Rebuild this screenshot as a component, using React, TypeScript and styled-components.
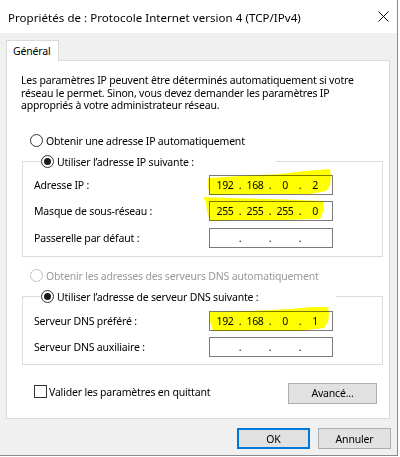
import React from "react";
import styled, { createGlobalStyle } from "styled-components";

const GlobalStyle = createGlobalStyle`
  html, body {
    margin: 0;
    padding: 0;
    background: #ffffff;
  }
  body {
    font-family: "Noto Sans", "Open Sans", "Liberation Sans", sans-serif;
    font-size: 10.5px;
    letter-spacing: -0.18px;
    color: #000000;
  }
`;

const Screen = styled.div`
  width: 400px;
  height: 457px;
  overflow: hidden;
  background: #ffffff;
`;

const Window = styled.div`
  position: relative;
  width: 398px;
  height: 456px;
  box-sizing: border-box;
  border-right: 1px solid #8a8a8a;
  border-bottom: 1px solid #8a8a8a;
  display: flex;
  flex-direction: column;
  background: #f0f0f0;
`;

const TitleBar = styled.div`
  height: 33px;
  flex: none;
  background: #ffffff;
  display: flex;
  align-items: center;
  justify-content: space-between;
  padding: 2px 0 0 8px;
  box-sizing: border-box;
`;

const TitleText = styled.span`
  white-space: nowrap;
  font-size: 11.5px;
  letter-spacing: 0.05px;
`;

const CloseButton = styled.div`
  width: 28px;
  height: 33px;
  display: flex;
  align-items: center;
  justify-content: center;
  margin-top: -2px;
`;

const Body = styled.div`
  flex: 1;
  padding: 7px 0 0 6px;
  display: flex;
  flex-direction: column;
`;

const TabStrip = styled.div`
  display: flex;
  height: 20px;
`;

const Tab = styled.div`
  position: relative;
  z-index: 1;
  width: 53px;
  height: 21px;
  box-sizing: border-box;
  border: 1px solid #d9d9d9;
  border-bottom: none;
  background: #ffffff;
  padding: 3px 0 0 6px;
`;

const Panel = styled.div`
  width: 384px;
  height: 359px;
  box-sizing: border-box;
  border: 1px solid #d9d9d9;
  background: #ffffff;
  padding: 13px 6px 0 14px;
  display: flex;
  flex-direction: column;
`;

const Description = styled.p`
  margin: 0;
  line-height: 12.5px;
  white-space: nowrap;
`;

const OptionRow = styled.div<{ $top: number }>`
  display: flex;
  align-items: center;
  height: 14px;
  margin: ${(p) => p.$top}px 0 0 9px;
`;

const RadioCircle = styled.span<{ $checked?: boolean; $disabled?: boolean }>`
  position: relative;
  width: 13px;
  height: 13px;
  flex: none;
  box-sizing: border-box;
  border-radius: 50%;
  border: 1px solid ${(p) => (p.$disabled ? "#c2c2c2" : "#333333")};
  background: #ffffff;
  margin-right: 3px;

  &::after {
    content: "";
    display: ${(p) => (p.$checked ? "block" : "none")};
    position: absolute;
    left: 2px;
    top: 2px;
    width: 7px;
    height: 7px;
    border-radius: 50%;
    background: #1a1a1a;
  }
`;

const OptionLabel = styled.span<{ $disabled?: boolean }>`
  white-space: nowrap;
  color: ${(p) => (p.$disabled ? "#9a9a9a" : "#000000")};
`;

const Group = styled.fieldset<{ $top: number; $padTop: number; $padBottom: number; $gap: number }>`
  margin: ${(p) => p.$top}px 0 0 1px;
  padding: ${(p) => p.$padTop}px 49px ${(p) => p.$padBottom}px 11px;
  border: 1px solid #dcdcdc;
  min-width: 0;
  display: flex;
  flex-direction: column;
  gap: ${(p) => p.$gap}px;
`;

const GroupLegend = styled.legend<{ $width: number }>`
  margin-left: 7px;
  padding: 0;
  width: ${(p) => p.$width}px;
  height: 14px;
  display: flex;
  align-items: center;
`;

const FieldRow = styled.div`
  display: flex;
  align-items: center;
  justify-content: space-between;
  height: 20px;
`;

const FieldLabel = styled.span`
  white-space: nowrap;
`;

const IpBox = styled.div`
  width: 124px;
  height: 20px;
  box-sizing: border-box;
  border: 1px solid #7a7a7a;
  background: #ffffff;
  display: flex;
  align-items: center;
  padding-left: 2px;
`;

const Octet = styled.span`
  width: 26px;
  text-align: center;
  letter-spacing: -0.3px;
`;

const Dot = styled.span`
  width: 4px;
  text-align: center;
`;

const BottomRow = styled.div`
  margin: 18px 6px 0 13px;
  display: flex;
  justify-content: space-between;
  align-items: flex-start;
`;

const CheckLine = styled.label`
  display: flex;
  align-items: center;
  margin-top: 2px;
  white-space: nowrap;
`;

const CheckBox = styled.span`
  width: 13px;
  height: 13px;
  box-sizing: border-box;
  border: 1px solid #333333;
  background: #ffffff;
  margin-right: 2px;
`;

const DialogButton = styled.button<{ $width: number; $default?: boolean }>`
  width: ${(p) => p.$width}px;
  height: 21px;
  box-sizing: border-box;
  padding: 0;
  font: inherit;
  letter-spacing: inherit;
  color: #000000;
  background: #e1e1e1;
  border: ${(p) => (p.$default ? "2px solid #0078d7" : "1px solid #adadad")};
`;

const Footer = styled.div`
  display: flex;
  justify-content: flex-end;
  gap: 8px;
  margin-top: 9px;
  padding-right: 6px;
`;

const Highlights = styled.svg`
  position: absolute;
  left: 0;
  top: 0;
  width: 398px;
  height: 456px;
  pointer-events: none;
  mix-blend-mode: multiply;
`;

function IpField({ value }: { value?: string[] }) {
  const parts = value ?? ["", "", "", ""];
  return (
    <IpBox>
      {parts.map((p, i) => (
        <React.Fragment key={i}>
          <Octet>{p}</Octet>
          {i < 3 && <Dot>.</Dot>}
        </React.Fragment>
      ))}
    </IpBox>
  );
}

function Radio({ checked, disabled, children }: { checked?: boolean; disabled?: boolean; children: React.ReactNode }) {
  return (
    <>
      <RadioCircle $checked={checked} $disabled={disabled} />
      <OptionLabel $disabled={disabled}>{children}</OptionLabel>
    </>
  );
}

export default function App() {
  return (
    <Screen>
      <GlobalStyle />
      <Window>
        <TitleBar>
          <TitleText>Propriétés de : Protocole Internet version 4 (TCP/IPv4)</TitleText>
          <CloseButton>
            <svg width="11" height="11" viewBox="0 0 11 11">
              <path d="M0.5 0.5 L10.5 10.5 M10.5 0.5 L0.5 10.5" stroke="#000" strokeWidth="1" fill="none" />
            </svg>
          </CloseButton>
        </TitleBar>
        <Body>
          <TabStrip>
            <Tab>Général</Tab>
          </TabStrip>
          <Panel>
            <Description>
              Les paramètres IP peuvent être déterminés automatiquement si votre
              <br />
              réseau le permet. Sinon, vous devez demander les paramètres IP
              <br />
              appropriés à votre administrateur réseau.
            </Description>
            <OptionRow $top={22}>
              <Radio>Obtenir une adresse IP automatiquement</Radio>
            </OptionRow>
            <Group $top={7} $padTop={6} $padBottom={8} $gap={6.5}>
              <GroupLegend $width={235}>
                <Radio checked>Utiliser l’adresse IP suivante :</Radio>
              </GroupLegend>
              <FieldRow>
                <FieldLabel>Adresse IP :</FieldLabel>
                <IpField value={["192", "168", "0", "2"]} />
              </FieldRow>
              <FieldRow>
                <FieldLabel>Masque de sous-réseau :</FieldLabel>
                <IpField value={["255", "255", "255", "0"]} />
              </FieldRow>
              <FieldRow>
                <FieldLabel>Passerelle par défaut :</FieldLabel>
                <IpField />
              </FieldRow>
            </Group>
            <OptionRow $top={12}>
              <Radio disabled>Obtenir les adresses des serveurs DNS automatiquement</Radio>
            </OptionRow>
            <Group $top={7} $padTop={7} $padBottom={7} $gap={6}>
              <GroupLegend $width={295}>
                <Radio checked>Utiliser l’adresse de serveur DNS suivante :</Radio>
              </GroupLegend>
              <FieldRow>
                <FieldLabel>Serveur DNS préféré :</FieldLabel>
                <IpField value={["192", "168", "0", "1"]} />
              </FieldRow>
              <FieldRow>
                <FieldLabel>Serveur DNS auxiliaire :</FieldLabel>
                <IpField />
              </FieldRow>
            </Group>
            <BottomRow>
              <CheckLine>
                <CheckBox />
                Valider les paramètres en quittant
              </CheckLine>
              <DialogButton $width={89}>Avancé...</DialogButton>
            </BottomRow>
          </Panel>
          <Footer>
            <DialogButton $width={73} $default>
              OK
            </DialogButton>
            <DialogButton $width={73}>Annuler</DialogButton>
          </Footer>
        </Body>
        <Highlights viewBox="0 0 398 456">
          <polygon
            fill="#ffff00"
            points="208,178 240,176 280,174 305,171 330,169 331,176 330,186 326,191 310,194 260,194 210,195 208,188"
          />
          <polygon
            fill="#ffff00"
            points="203,197 230,198 270,199 300,200 323,201 324,210 320,219 280,220 240,220 210,221 207,212 206,202"
          />
          <polygon
            fill="#ffff00"
            points="210,312 250,311 290,309 313,307 328,307 329,314 328,322 324,328 300,331 250,331 213,331 210,322"
          />
        </Highlights>
      </Window>
    </Screen>
  );
}
